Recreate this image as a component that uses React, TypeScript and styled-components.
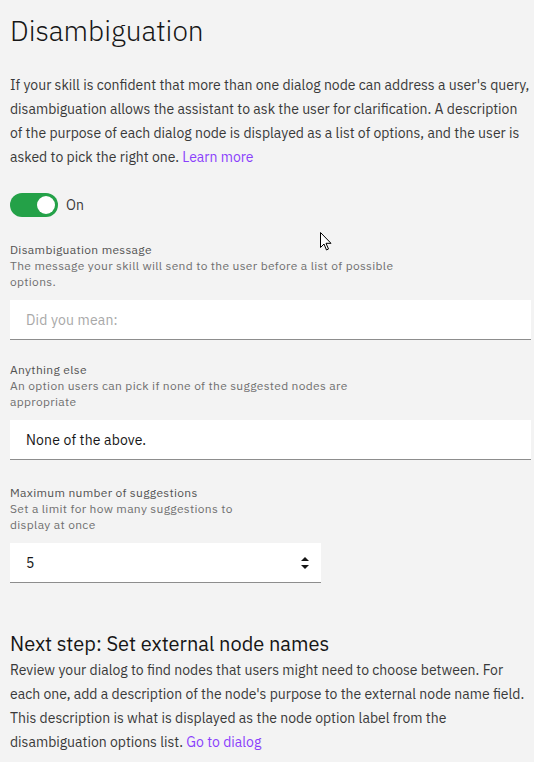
import React from "react";
import styled, { createGlobalStyle } from "styled-components";

const GlobalStyle = createGlobalStyle`
  html, body {
    margin: 0;
    padding: 0;
    background: #f3f3f3;
  }
  body {
    font-family: "IBM Plex Sans", "Noto Sans", "Open Sans", sans-serif;
    color: #393939;
  }
`;

const Page = styled.div`
  position: relative;
  display: flex;
  flex-direction: column;
  padding: 12px 3px 20px 10px;
  width: 534px;
  box-sizing: border-box;
`;

const Title = styled.h1`
  margin: 0;
  font-size: 28px;
  line-height: 38px;
  font-weight: 300;
  color: #161616;
`;

const Intro = styled.p`
  margin: 23px 0 0;
  font-size: 14px;
  line-height: 24px;
  color: #393939;
`;

const Link = styled.a`
  color: #8a3ffc;
  text-decoration: none;
`;

const ToggleRow = styled.label`
  display: flex;
  align-items: center;
  gap: 8px;
  margin-top: 24px;
  font-size: 14px;
  letter-spacing: 0.16px;
  color: #393939;
`;

const Track = styled.span<{ $on: boolean }>`
  position: relative;
  width: 48px;
  height: 24px;
  border-radius: 12px;
  background: ${(p) => (p.$on ? "#24a148" : "#8d8d8d")};
`;

const Knob = styled.span<{ $on: boolean }>`
  position: absolute;
  top: 3px;
  left: ${(p) => (p.$on ? "27px" : "3px")};
  width: 18px;
  height: 18px;
  border-radius: 50%;
  background: #fff;
`;

const Field = styled.div<{ $gap: number }>`
  display: flex;
  flex-direction: column;
  margin-top: ${(p) => p.$gap}px;
`;

const Label = styled.div`
  font-size: 12px;
  line-height: 16px;
  letter-spacing: 0.32px;
  color: #525252;
`;

const Helper = styled.div<{ $width: number }>`
  max-width: ${(p) => p.$width}px;
  font-size: 12px;
  line-height: 16px;
  letter-spacing: 0.32px;
  color: #6f6f6f;
`;

const InputBox = styled.div<{ $width?: number }>`
  display: flex;
  align-items: center;
  justify-content: space-between;
  box-sizing: border-box;
  width: ${(p) => (p.$width ? `${p.$width}px` : "100%")};
  height: 40px;
  margin-top: 10px;
  padding: 0 12px 0 16px;
  background: #fff;
  border-bottom: 1px solid #8d8d8d;
  font-size: 14px;
  letter-spacing: 0.16px;
  color: #161616;
`;

const Placeholder = styled.span`
  color: #a8a8a8;
`;

const Stepper = styled.span`
  display: flex;
  flex-direction: column;
  gap: 4px;
`;

const NextTitle = styled.h2`
  margin: 47px 0 0;
  font-size: 20px;
  line-height: 28px;
  font-weight: 400;
  color: #161616;
`;

const NextText = styled.p`
  margin: 0;
  font-size: 14px;
  line-height: 24px;
  color: #393939;
`;

const Cursor = styled.svg`
  position: absolute;
  left: 320px;
  top: 232px;
`;

const Toggle = ({ on }: { on: boolean }) => (
  <ToggleRow>
    <Track $on={on}>
      <Knob $on={on} />
    </Track>
    {on ? "On" : "Off"}
  </ToggleRow>
);

const App = () => {
  return (
    <>
      <GlobalStyle />
      <Page>
        <Title>Disambiguation</Title>
        <Intro>
          If your skill is confident that more than one dialog node can address a user's query,
          disambiguation allows the assistant to ask the user for clarification. A description of
          the purpose of each dialog node is displayed as a list of options, and the user is asked
          to pick the right one. <Link href="#">Learn more</Link>
        </Intro>

        <Toggle on />

        <Field $gap={25}>
          <Label>Disambiguation message</Label>
          <Helper $width={400}>
            The message your skill will send to the user before a list of possible options.
          </Helper>
          <InputBox>
            <Placeholder>Did you mean:</Placeholder>
          </InputBox>
        </Field>

        <Field $gap={22}>
          <Label>Anything else</Label>
          <Helper $width={400}>
            An option users can pick if none of the suggested nodes are appropriate
          </Helper>
          <InputBox>None of the above.</InputBox>
        </Field>

        <Field $gap={25}>
          <Label>Maximum number of suggestions</Label>
          <Helper $width={240}>Set a limit for how many suggestions to display at once</Helper>
          <InputBox $width={311}>
            5
            <Stepper>
              <svg width="8" height="4" viewBox="0 0 8 4">
                <path d="M4 0 L8 4 L0 4 Z" fill="#161616" />
              </svg>
              <svg width="8" height="4" viewBox="0 0 8 4">
                <path d="M0 0 L8 0 L4 4 Z" fill="#161616" />
              </svg>
            </Stepper>
          </InputBox>
        </Field>

        <NextTitle>Next step: Set external node names</NextTitle>
        <NextText>
          Review your dialog to find nodes that users might need to choose between. For each one,
          add a description of the node's purpose to the external node name field. This
          description is what is displayed as the node option label from the disambiguation
          options list. <Link href="#">Go to dialog</Link>
        </NextText>

        <Cursor width="12" height="19" viewBox="0 0 12 19">
          <path
            d="M0.5 0.5 L0.5 15.5 L4 12 L6.5 18 L8.5 17 L6 11.3 L11 11.3 Z"
            fill="#fff"
            stroke="#000"
            strokeWidth="1"
            strokeLinejoin="round"
          />
        </Cursor>
      </Page>
    </>
  );
};

export default App;
